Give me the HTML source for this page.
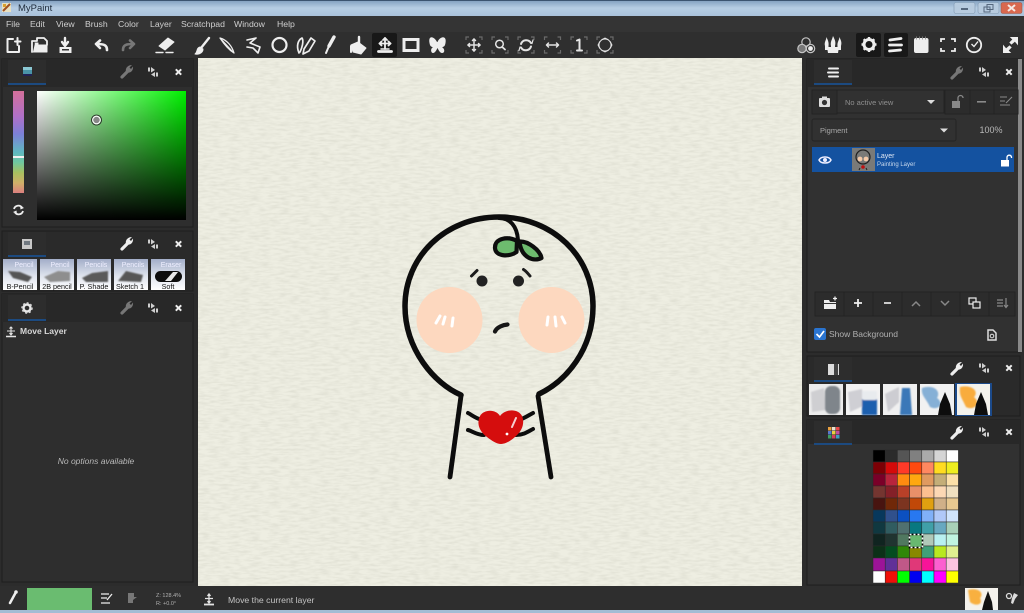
<!DOCTYPE html>
<html><head><meta charset="utf-8"><title>MyPaint</title>
<style>
html,body{margin:0;padding:0;background:#2e2e2e;}
body{width:1024px;height:613px;overflow:hidden;position:relative;}
svg{position:absolute;left:0;top:0;display:block;filter:blur(.3px);}
text{font-family:"Liberation Sans",sans-serif;}
</style></head><body>
<svg width="1024" height="613" viewBox="0 0 1024 613" xmlns="http://www.w3.org/2000/svg">
<defs>
<linearGradient id="tb" x1="0" y1="0" x2="0" y2="1"><stop offset="0" stop-color="#7f9dbd"/><stop offset=".5" stop-color="#b6cde3"/><stop offset="1" stop-color="#a9c1da"/></linearGradient>
<linearGradient id="sv1" x1="0" y1="0" x2="1" y2="0"><stop offset="0" stop-color="#fff"/><stop offset="1" stop-color="#00f000"/></linearGradient>
<linearGradient id="sv2" x1="0" y1="0" x2="0" y2="1"><stop offset="0" stop-color="#000" stop-opacity="0"/><stop offset="1" stop-color="#000"/></linearGradient>
<linearGradient id="hue" x1="0" y1="0" x2="0" y2="1"><stop offset="0" stop-color="#d4709a"/><stop offset=".25" stop-color="#b070c8"/><stop offset=".42" stop-color="#7c80d8"/><stop offset=".6" stop-color="#60b8c0"/><stop offset=".7" stop-color="#70c8a0"/><stop offset=".8" stop-color="#a8c060"/><stop offset=".9" stop-color="#d0b068"/><stop offset="1" stop-color="#dc8080"/></linearGradient>
<linearGradient id="th" x1="0" y1="0" x2="0" y2="1"><stop offset="0" stop-color="#a2adc8"/><stop offset=".55" stop-color="#dfe4ee"/><stop offset="1" stop-color="#fff"/></linearGradient>
<filter id="paper" x="0" y="0" width="100%" height="100%"><feTurbulence type="fractalNoise" baseFrequency=".1 .45" numOctaves="2" seed="4"/><feColorMatrix values="0 0 0 0 .5  0 0 0 0 .5  0 0 0 0 .42  .55 0 0 0 -.2"/></filter>
<filter id="soft"><feGaussianBlur stdDeviation=".3"/></filter>
<filter id="softi"><feGaussianBlur stdDeviation=".9"/></filter>
<path id="corners" d="M-8 -5 V-8 H-5 M5 -8 H8 V-5 M8 5 V8 H5 M-5 8 H-8 V5" fill="none" stroke="#6a6a6a" stroke-width="1.200"/>
<g id="wrench"><path d="M0 0 L6 -6" fill="none" stroke-width="3.200" stroke-linecap="round" stroke="currentColor"/><path d="M4 -5 C3 -9 6 -12 10 -12 L7.500 -9.500 L9 -8 L11 -10.500 C11.500 -6 8 -3 4 -5 Z" fill="currentColor"/></g>
<g id="detach" fill="#cfcfcf"><rect x="0" y="0.500" width="2" height="4"/><path d="M3 0 L7 3 L3 5.500 Z"/><rect x="8" y="5.500" width="2" height="4"/><path d="M7 5 L3 7.500 L7 10 Z"/></g>
<path id="closex" d="M-2.700 -2.700 L2.700 2.700 M2.700 -2.700 L-2.700 2.700" stroke="#eee" stroke-width="2"/>
</defs>

<!-- title bar -->
<rect width="1024" height="16" fill="url(#tb)"/>
<rect width="1024" height="1" fill="#3c5470"/>
<rect x="2" y="3" width="9" height="9" fill="#e8e0c0"/><path d="M3 11 L10 4" stroke="#a05020" stroke-width="2"/><rect x="3" y="4" width="3" height="3" fill="#d8a030"/>
<text x="18" y="11" font-size="9.500" fill="#1d2a3a">MyPaint</text>
<rect x="954" y="2.500" width="21" height="11" rx="2" fill="#b7cbdf" stroke="#7f97b0" stroke-width=".6"/><rect x="961" y="8" width="7" height="2" fill="#55677d"/>
<rect x="978" y="2.500" width="21" height="11" rx="2" fill="#b7cbdf" stroke="#7f97b0" stroke-width=".6"/><rect x="984" y="7" width="6" height="5" fill="none" stroke="#55677d"/><rect x="987" y="4.500" width="6" height="5" fill="none" stroke="#55677d"/>
<rect x="1001" y="2.500" width="21" height="11" rx="2" fill="#d9684f" stroke="#9c5a50" stroke-width=".6"/><path d="M1008 5 L1015 11 M1015 5 L1008 11" stroke="#f6e8e4" stroke-width="2"/>

<!-- menu & toolbar -->
<rect y="16" width="1024" height="16" fill="#343434"/>
<rect y="32" width="1024" height="26" fill="#2f2f2f"/>
<g font-size="8.700" fill="#cfcfcf">
<text x="6" y="27">File</text><text x="30" y="27">Edit</text><text x="56" y="27">View</text><text x="85" y="27">Brush</text><text x="118" y="27">Color</text><text x="150" y="27">Layer</text><text x="181" y="27">Scratchpad</text><text x="234" y="27">Window</text><text x="277" y="27">Help</text>
</g>

<!-- toolbar icons -->
<g fill="none" stroke="#eee" stroke-width="2" stroke-linecap="round" stroke-linejoin="round">
<path d="M13 39 H7.500 V52 H19 V46" stroke-width="2"/><path d="M15 41.500 H20.500 M17.500 38 V45" stroke-width="2"/>
<path d="M32 52 V41 H37 V38 H44 L47 41 V45" stroke-width="1.800"/><path d="M33 52 H47 V45 H38 V43 H35" fill="#eee" stroke-width="1"/>
<path d="M65 38 V45 M62 42 L65 46 L68 42" stroke-width="2.400"/><rect x="59.500" y="47" width="12" height="6" fill="#eee" stroke="none"/><rect x="62" y="49" width="7" height="1.500" fill="#333" stroke="none"/>
<path d="M107 50 C107 45 104 44 97 44 M100 40.500 L96 44 L100 48" stroke-width="2.600"/>
<path d="M123 50 C123 45 126 44 133 44 M130 40.500 L134 44 L130 48" stroke="#777" stroke-width="2.600"/>
<path d="M159 46 L168 38 L174 42 L165 50 Z" fill="#eee" stroke-width="1"/><path d="M156 52.500 H163 M166 52.500 H173" stroke-width="1.400"/>
<path d="M209 38 L201 48" stroke-width="2.400"/><path d="M200 47 C196 48 198 52 195 54 C200 55 203 52 203 49 Z" fill="#eee" stroke-width="1"/>
<path d="M220 38 C227 40 232 46 234 53 C229 50 224 44 220 38 Z" stroke-width="1.300"/><path d="M221 39 L233 52" stroke-width="1"/>
<path d="M247 40 L256 38 L250 43 L260 47 L258 53 L253 48 L247 47" stroke-width="1.600"/>
<circle cx="279.500" cy="45" r="7" stroke-width="2.200"/>
<path d="M299 53 C296 46 298 40 302 38 C304 41 302 48 300 52" stroke-width="1.700"/><path d="M304 49 L311 38 L315 41 L309 51 L303 54 Z" stroke-width="1.700"/>
<path d="M334 37 L329 46" stroke-width="3.400"/><path d="M329 46 L326 53" stroke-width="2"/>
<path d="M351 45 L358 42 L366 48 L361 54 L353 52 Z" fill="#eee" stroke-width="1"/><path d="M359 37 V46" stroke-width="2.400"/><path d="M351 46 V52" stroke-width="2"/>
</g>
<rect x="372" y="33" width="25" height="24" rx="2" fill="#181818"/>
<rect x="856" y="33" width="25" height="24" rx="2" fill="#181818"/>
<rect x="884" y="33" width="24" height="24" rx="2" fill="#181818"/>
<g fill="none" stroke="#eee" stroke-width="1.800" stroke-linecap="round" stroke-linejoin="round">
<path d="M385 38 V49 M379.500 43.500 H390.500"/><path d="M383 40 L385 38 L387 40 M381.500 41.500 L379.500 43.500 L381.500 45.500 M388.500 41.500 L390.500 43.500 L388.500 45.500"/><path d="M378.500 51.500 H391.500" stroke-width="2.800"/><path d="M381 49 H389" stroke-width="1.500"/>
<rect x="404" y="39.500" width="14" height="11" stroke-width="3" stroke-linecap="butt" stroke-linejoin="miter"/>
<path d="M437 42 C434 36 428 35 429.500 43 C430 46 431 47 433 47 C430 49 431 53 433 53 C435 53 436.500 50 437.500 48 C438.500 50 440 53 442 53 C445 53 445 49 442 47 C444 47 445 46 445.500 43 C447 35 440 36 437.500 42 Z" fill="#eee" stroke="none"/>
</g>
<!-- view icons -->
<use href="#corners" x="474" y="45"/><use href="#corners" x="500" y="45"/><use href="#corners" x="526" y="45"/><use href="#corners" x="552.500" y="45"/><use href="#corners" x="579" y="45"/><use href="#corners" x="605" y="45"/>
<g fill="none" stroke="#e4e4e4" stroke-width="1.500" stroke-linecap="round" stroke-linejoin="round">
<path d="M474 39 V51 M468 45 H480"/><path d="M472.500 40.500 L474 39 L475.500 40.500 M472.500 49.500 L474 51 L475.500 49.500 M469.500 43.500 L468 45 L469.500 46.500 M478.500 43.500 L480 45 L478.500 46.500"/>
<circle cx="499.500" cy="44" r="3.800"/><path d="M502.200 47 L505 49.500" stroke-width="1.800"/>
<path d="M521 44 A5.500 5.500 0 0 1 531 43 M531 46.500 A5.500 5.500 0 0 1 521 47.500" stroke-width="2"/><path d="M529 41 L532 43.500 L533 40 M523 49.500 L520 47 L519 50.500" stroke-width="1.200"/>
<path d="M546.500 45 H558.500 M548.500 43 L546.500 45 L548.500 47 M556.500 43 L558.500 45 L556.500 47"/>
<path d="M577 40.500 L579.500 39.500 V50 M577 50.500 H582" stroke-width="2"/>
</g>
<g fill="#e4e4e4"><path d="M601 39.500 H609 L605 37.500 Z M601 50.500 H609 L605 52.500 Z"/><path d="M599.500 41 V49 L597.500 45 Z M610.500 41 V49 L612.500 45 Z" /></g>
<circle cx="605" cy="45" r="6" fill="none" stroke="#e4e4e4" stroke-width="1"/>
<!-- right toolbar -->
<g fill="none" stroke="#c6c6c6" stroke-width="1.200"><circle cx="806" cy="42" r="4.200"/><circle cx="802" cy="48.500" r="4.200" fill="#777"/><circle cx="810.500" cy="48.500" r="4.200"/><circle cx="810.500" cy="48.500" r="2.400" fill="#eee" stroke="none"/></g>
<g fill="#eee"><path d="M825 50 V46 C824 42 826 41 826.500 37 C828 41 829 42 828.500 46 V50 Z M831 53 V46 C830 42 832 40 833 36 C835 40 836 42 835 46 V53 Z M837.500 50 V46 C837 42 839 41 839.500 37 C841 41 842 42 841 46 V50 Z"/><path d="M827 47 H839 L838 53 H828 Z"/></g>
<circle cx="869" cy="44.500" r="5" fill="none" stroke="#eee" stroke-width="3"/>
<g stroke="#eee" stroke-width="2.400" stroke-linecap="butt"><path d="M869 37 V39.500 M869 49.500 V52 M861.500 44.500 H864 M874 44.500 H876.500 M863.700 39.200 L865.500 41 M872.500 48 L874.300 49.800 M874.300 39.200 L872.500 41 M865.500 48 L863.700 49.800"/></g>
<g fill="none" stroke="#eee" stroke-width="2.800" stroke-linecap="round"><path d="M890 40 L901 38.500 M889.500 45 H901.500 M889.500 51 L900.500 50"/></g>
<rect x="914" y="38" width="14.500" height="15" rx="2" fill="#eee"/><path d="M916.500 36.500 V39.500 M919.500 36.500 V39.500 M922.500 36.500 V39.500 M925.500 36.500 V39.500" stroke="#888" stroke-width=".8"/>
<path d="M941 42 V39 H945 M951 39 H955 V42 M955 48 V51 H951 M945 51 H941 V48" fill="none" stroke="#eee" stroke-width="1.800"/>
<circle cx="974" cy="45" r="7.200" fill="none" stroke="#eee" stroke-width="1.800"/><path d="M972 40.500 V0" stroke="none"/><path d="M971.500 44 L974 46.500 L978 41.500" fill="none" stroke="#eee" stroke-width="1.400"/>
<path d="M1003.500 46 V52.500 H1010 L1008 50.500 L1011 47.500 L1009.500 46 L1006 49 Z M1017.500 44 V37.500 H1011 L1013 39.500 L1010 42.500 L1011.500 44 L1015 41 Z" fill="#eee" stroke="#eee"/>

<!-- left panels -->
<rect x="0" y="58" width="198" height="528" fill="#2c2c2c"/>
<rect x="2" y="59" width="191" height="168" fill="#2e2e2e" stroke="#1e1e1e"/>
<rect x="2" y="59" width="191" height="28" fill="#282828"/>
<rect x="8" y="60" width="38" height="25" fill="#2d2d2d"/>
<rect x="8" y="83" width="38" height="2" fill="#1c4a80"/>
<rect x="23" y="67" width="9" height="9" fill="#4a94a8"/><rect x="23" y="67" width="9" height="3" fill="#8bc8d4"/><rect x="23" y="74" width="9" height="2" fill="#225"/>
<rect x="13" y="91" width="11" height="102" fill="url(#hue)"/><rect x="13" y="156" width="11" height="2" fill="#f2f2f2"/>
<rect x="37" y="91" width="149" height="129" fill="url(#sv1)"/><rect x="37" y="91" width="149" height="129" fill="url(#sv2)"/>
<circle cx="96.500" cy="120" r="3.800" fill="#888" stroke="#fff" stroke-width="1.100"/><circle cx="96.500" cy="120" r="5" fill="none" stroke="#222" stroke-width=".8"/>
<g fill="none" stroke="#eee" stroke-width="1.800"><path d="M14 209 A4.500 4.500 0 0 1 22 207.500 M23 211 A4.500 4.500 0 0 1 15 212.500"/></g><path d="M20 205 L24 208 L20.500 209.500 Z M17 214.500 L13 212 L16.500 210.500 Z" fill="#eee"/>

<rect x="2" y="231" width="191" height="60" fill="#2a2a2a" stroke="#1e1e1e"/>
<rect x="8" y="232" width="38" height="24" fill="#2d2d2d"/>
<rect x="8" y="255" width="38" height="2" fill="#1c4a80"/>
<rect x="22" y="239" width="10" height="10" fill="#c8c8c8"/><rect x="24" y="241" width="6" height="4" fill="#707880"/>
<g>
<rect x="3" y="259" width="34" height="31" fill="url(#th)"/><rect x="40" y="259" width="34" height="31" fill="url(#th)"/><rect x="77" y="259" width="34" height="31" fill="url(#th)"/><rect x="114" y="259" width="34" height="31" fill="url(#th)"/><rect x="151" y="259" width="34" height="31" fill="url(#th)"/>
<g filter="url(#softi)"><path d="M8 271 L20 272 L32 277 L28 282 L13 278 Z" fill="#555"/><path d="M44 277 L58 271 L70 272 L70 281 L50 282 Z" fill="#8e8e8e"/><path d="M82 278 L92 273 L108 271 L108 282 L86 282 Z" fill="#5a5a5a"/><path d="M118 281 L126 271 L143 275 L141 282 Z" fill="#565656"/></g>
<rect x="155" y="271" width="27" height="11" rx="5.500" fill="#0c0c0c" filter="url(#soft)"/><path d="M165 281 L173 272 L178 272 L171 281 Z" fill="#e8e8e8" filter="url(#soft)"/>
<g font-size="7" fill="#eef" text-anchor="middle"><text x="24" y="267">Pencil</text><text x="60" y="267">Pencil</text><text x="96" y="267">Pencils</text><text x="133" y="267">Pencils</text><text x="171" y="267">Eraser</text></g>
<g font-size="7.200" fill="#111" text-anchor="middle"><text x="20" y="289">B-Pencil</text><text x="57" y="289">2B pencil</text><text x="94" y="289">P. Shade</text><text x="130" y="289">Sketch 1</text><text x="168" y="289">Soft</text></g>
</g>

<rect x="2" y="294" width="191" height="288" fill="#2e2e2e" stroke="#1e1e1e"/>
<rect x="2" y="294" width="191" height="28" fill="#282828"/>
<rect x="8" y="295" width="38" height="25" fill="#2d2d2d"/>
<rect x="8" y="319" width="38" height="2" fill="#1c4a80"/>
<circle cx="27" cy="308" r="3.500" fill="none" stroke="#e8e8e8" stroke-width="2.400"/><circle cx="27" cy="308" r="5.200" fill="none" stroke="#e8e8e8" stroke-width="1" stroke-dasharray="2 2"/>
<g fill="none" stroke="#e4e4e4" stroke-width="1.100"><path d="M11 327 V335 M7 331 H15 M9.500 328.500 L11 327 L12.500 328.500 M9.500 333 L11 335 L12.500 333"/><path d="M6 336.500 H16" stroke-width="1.500"/></g>
<text x="20" y="334" font-size="8.500" font-weight="bold" fill="#d8d8d8">Move Layer</text>
<text x="96" y="464" font-size="8.500" font-style="italic" fill="#b8b8b8" text-anchor="middle">No options available</text>

<!-- canvas -->
<rect x="198" y="58" width="604" height="528" fill="#eeeee2"/>
<rect x="198" y="58" width="604" height="528" filter="url(#paper)"/>
<g filter="url(#soft)">
<g fill="#fdd8bf"><circle cx="449.500" cy="320" r="33"/><circle cx="551.500" cy="320" r="33"/></g>
<g stroke="#fff" stroke-width="3" stroke-linecap="round" fill="none"><path d="M440 316 L436 323"/><path d="M445 317 L443 324"/><path d="M453 318 L452 326"/><path d="M548 317 L547 325"/><path d="M555 317 L556 326"/><path d="M562 317 L565 323"/></g>
<path d="M461 395 C435 384 405 350 405 306 C405 257 445 217 499 217 C553 217 593 257 593 306 C593 350 566 381 539 394" fill="none" stroke="#0c0c0c" stroke-width="5.500" stroke-linecap="round"/>
<path d="M461 396 L450 477 M538 396 L551 477" fill="none" stroke="#111" stroke-width="4.800" stroke-linecap="round"/>
<path d="M499 218 C510 218 517 226 518 240" fill="none" stroke="#0c0c0c" stroke-width="4" stroke-linecap="round"/>
<path d="M517 241 C508 236 494.500 238 495 248 C495.500 257 510 257 516.500 252 Z" fill="#6dbb6e" stroke="#0c0c0c" stroke-width="4.200" stroke-linejoin="round"/>
<path d="M519.500 241.500 C528 241 540 250 541.500 258 C534 262 521 258 519.500 241.500 Z" fill="#6dbb6e" stroke="#0c0c0c" stroke-width="4.200" stroke-linejoin="round"/>
<g fill="#222"><circle cx="482" cy="281" r="5.500"/><circle cx="518.500" cy="281" r="5.500"/></g>
<path d="M471.500 276 L477 270.500 M523.500 269.500 C526 271 528 273.500 530 276" stroke="#1a1a1a" stroke-width="3" fill="none" stroke-linecap="round"/>
<path d="M495 331.500 C497 327 503 325 507.500 324.500" stroke="#151515" stroke-width="4.200" fill="none" stroke-linecap="round"/>
<path d="M468 413 C472 415 475 418 482 420 M468 430 C472 431 477 435 484 435 M533 413 C529 415 525 418 519 420 M533 429 C529 431 524 435 516 435" stroke="#111" stroke-width="4" fill="none" stroke-linecap="round"/>
<path d="M500 416 C496 409 484 409 480 416 C476 424 480 432 487 437 C492 441 497 444 501 444 C506 444 512 440 516 436 C522 431 525 423 522 416 C518 408 505 409 500 416 Z" fill="#d50a10"/>
<path d="M516 418 L512 427" stroke="#fff" stroke-width="2" stroke-linecap="round" opacity=".8"/><circle cx="507" cy="434" r="1.400" fill="#fff"/>
</g>

<!-- right panels -->
<rect x="802" y="58" width="222" height="528" fill="#2c2c2c"/>
<rect x="807" y="59" width="213" height="293" fill="#313131" stroke="#1e1e1e"/>
<rect x="807" y="59" width="213" height="28" fill="#282828"/>
<rect x="814" y="60" width="38" height="25" fill="#2d2d2d"/>
<rect x="814" y="83" width="38" height="2" fill="#1c4a80"/>
<rect x="1018" y="59" width="4" height="293" fill="#8a8a8a"/>
<path d="M829 68.500 H838 M828 72.500 H838 M829 76.500 H838" stroke="#eee" stroke-width="2" fill="none" stroke-linecap="round"/>
<g fill="#2c2c2c" stroke="#232323"><rect x="812" y="90" width="25" height="24"/><rect x="837" y="90" width="107" height="23" fill="#313131"/><rect x="945" y="90" width="25" height="24"/><rect x="970" y="90" width="24" height="24"/><rect x="994" y="90" width="24" height="24"/></g>
<rect x="819" y="98" width="11" height="9" rx="1" fill="#ddd"/><circle cx="824.500" cy="102.500" r="2.600" fill="#333"/><rect x="822" y="96.500" width="5" height="2" fill="#ddd"/>
<text x="845" y="105" font-size="7.500" fill="#8e8e8e">No active view</text>
<path d="M927 100 H935 L931 104 Z" fill="#ddd"/>
<rect x="952" y="101" width="8" height="7" fill="#888"/><path d="M958 101 V98 A2.500 2.500 0 0 1 963 98" fill="none" stroke="#888" stroke-width="1.300"/>
<rect x="977" y="101" width="9" height="1.600" fill="#8a8a8a"/>
<path d="M1000 97 H1007 M1000 101 H1005 M1000 105 H1010 M1006 103 L1012 97" stroke="#8a8a8a" stroke-width="1.100" fill="none"/>
<rect x="812" y="119" width="144" height="22" rx="2" fill="#313131" stroke="#242424"/>
<text x="820" y="133" font-size="7.500" fill="#a8a8a8">Pigment</text>
<path d="M940 128.500 H948 L944 132.500 Z" fill="#ddd"/>
<text x="991" y="133" font-size="9" fill="#b8b8b8" text-anchor="middle">100%</text>
<rect x="812" y="147" width="202" height="25" fill="#1452a0"/>
<path d="M819 160 C821 156 829 156 831 160 C829 164 821 164 819 160 Z" fill="none" stroke="#eef" stroke-width="1.500"/><circle cx="825" cy="160" r="2" fill="#eef"/>
<rect x="852" y="148" width="23" height="23" fill="#7a7a78"/><circle cx="863" cy="157" r="7" fill="none" stroke="#222" stroke-width="1.200"/><circle cx="860" cy="159" r="2.400" fill="#f4c9a8"/><circle cx="866" cy="159" r="2.400" fill="#f4c9a8"/><path d="M860 168 L859 170 M866 168 L867 170" stroke="#222"/><circle cx="863" cy="167" r="1.800" fill="#c01010"/>
<text x="877" y="158" font-size="7" fill="#e0e8f4">Layer</text>
<text x="877" y="166" font-size="6" fill="#c8d8ec">Painting Layer</text>
<rect x="1001" y="160" width="8" height="6.500" fill="#fff"/><path d="M1007 160 V157 A2.300 2.300 0 0 1 1011.500 157 V158" fill="none" stroke="#fff" stroke-width="1.300"/>
<g fill="#2c2c2c" stroke="#232323"><rect x="815" y="292" width="29" height="24"/><rect x="844" y="292" width="29" height="24"/><rect x="873" y="292" width="29" height="24"/><rect x="902" y="292" width="29" height="24"/><rect x="931" y="292" width="29" height="24"/><rect x="960" y="292" width="29" height="24"/><rect x="989" y="292" width="26" height="24"/></g>
<path d="M824 300 H829 L830 302 H836 V309 H824 Z" fill="#eee"/><path d="M833 298.500 H837 M835 296.500 V300.500" stroke="#eee" stroke-width="1.300"/><rect x="824" y="303" width="12" height="1" fill="#333"/>
<path d="M854 303 H862 M858 299 V307" stroke="#eee" stroke-width="1.800"/>
<path d="M884 303 H891" stroke="#ddd" stroke-width="1.800"/>
<path d="M912 306 L916 302 L920 306 M941 301 L945 305 L949 301" stroke="#888" stroke-width="1.500" fill="none"/>
<rect x="969" y="298" width="7" height="6" fill="none" stroke="#eee" stroke-width="1.200"/><rect x="973" y="302" width="7" height="6" fill="#2c2c2c" stroke="#eee" stroke-width="1.200"/>
<path d="M997 300 H1003 M997 303 H1003 M997 306 H1003 M1006 298 V307 M1004 305 L1006 307.500 L1008 305" stroke="#888" stroke-width="1.200" fill="none"/>
<rect x="814" y="328" width="12" height="12" rx="2" fill="#2a74d0"/><path d="M816.500 334 L819.500 337 L824 331" stroke="#fff" stroke-width="1.700" fill="none"/>
<text x="829" y="337" font-size="8.500" fill="#b0b0b0">Show Background</text>
<path d="M988 330 H993 L996 333 V340 H988 Z" fill="none" stroke="#ddd" stroke-width="1.500"/><circle cx="992" cy="336" r="1.800" fill="none" stroke="#ddd"/>

<rect x="807" y="356" width="213" height="60" fill="#2a2a2a" stroke="#1e1e1e"/>
<rect x="814" y="357" width="38" height="24" fill="#2d2d2d"/>
<rect x="814" y="380" width="38" height="2" fill="#1c4a80"/>
<rect x="828" y="364" width="11" height="11" fill="#ddd"/><rect x="834" y="364" width="4" height="11" fill="#444"/>
<g>
<rect x="809" y="384" width="34" height="31" fill="#ececec"/><rect x="846" y="384" width="34" height="31" fill="#f2f2f2"/><rect x="883" y="384" width="34" height="31" fill="#f0f0f0"/><rect x="920" y="384" width="34" height="31" fill="#f2f2f2"/><rect x="955" y="383" width="37" height="33" fill="#1c4a8a"/><rect x="957" y="384" width="33" height="31" fill="#f4f2ec"/>
<g filter="url(#softi)">
<path d="M811 392 L824 388 L826 410 L812 412 Z" fill="#cfcfd2"/><rect x="825" y="386" width="15" height="28" rx="6" fill="#7f858b"/>
<path d="M848 392 L862 389 L863 406 L850 412 Z" fill="#cfcfd4"/><rect x="862" y="399" width="15" height="16" fill="#1c5fae"/><rect x="862" y="391" width="15" height="9" rx="2" fill="#e8ebee"/>
<path d="M885 394 L899 387 L899 402 L888 412 Z" fill="#cdcdd2"/><path d="M902 388 H910 L912 415 H900 Z" fill="#3a78b8"/>
<path d="M922 388 C935 384 941 392 937 398 C945 404 938 411 930 407 C926 398 921 396 922 388 Z" fill="#86b0d6"/>
<path d="M960 387 C973 384 979 392 974 397 C982 404 973 411 966 407 C962 398 959 396 960 387 Z" fill="#f8ac3c"/>
</g>
<g filter="url(#soft)"><path d="M945 392 L950 404 L952 415 H938 L940 404 Z" fill="#111"/><path d="M981 392 L986 404 L988 415 H974 L976 404 Z" fill="#111"/></g>
</g>

<rect x="807" y="420" width="213" height="165" fill="#313131" stroke="#1e1e1e"/>
<rect x="807" y="420" width="213" height="24" fill="#282828"/>
<rect x="814" y="421" width="38" height="23" fill="#2d2d2d"/>
<rect x="814" y="443" width="38" height="2" fill="#1c4a80"/>
<g><rect x="828" y="427" width="3.500" height="3.500" fill="#e8a040"/><rect x="832" y="427" width="3.500" height="3.500" fill="#e8e0d0"/><rect x="836" y="427" width="3.500" height="3.500" fill="#e84848"/><rect x="828" y="431" width="3.500" height="3.500" fill="#5878d0"/><rect x="832" y="431" width="3.500" height="3.500" fill="#e8d040"/><rect x="836" y="431" width="3.500" height="3.500" fill="#c050a0"/><rect x="828" y="435" width="3.500" height="3.500" fill="#40a060"/><rect x="832" y="435" width="3.500" height="3.500" fill="#d04060"/><rect x="836" y="435" width="3.500" height="3.500" fill="#40a0c0"/></g>

<!-- panel header tools -->
<use href="#wrench" x="122" y="77" color="#777"/>
<use href="#wrench" x="122" y="249" color="#eee"/>
<use href="#wrench" x="122" y="313" color="#777"/>
<use href="#wrench" x="952" y="78" color="#777"/>
<use href="#wrench" x="952" y="374" color="#eee"/>
<use href="#wrench" x="952" y="438" color="#eee"/>
<use href="#detach" x="148" y="67"/><use href="#detach" x="148" y="239"/><use href="#detach" x="148" y="303"/>
<use href="#detach" x="979" y="67"/><use href="#detach" x="979" y="363"/><use href="#detach" x="979" y="427"/>
<use href="#closex" x="178.500" y="72"/><use href="#closex" x="178.500" y="244"/><use href="#closex" x="178.500" y="308"/>
<use href="#closex" x="1009" y="72"/><use href="#closex" x="1009" y="368"/><use href="#closex" x="1009" y="432"/>

<!-- palette -->
<g stroke="#2a2a2a" stroke-width=".5">
<g transform="translate(873,450)"><rect x="0" width="12.200" height="12" fill="#000"/><rect x="12.200" width="12.200" height="12" fill="#2b2b2b"/><rect x="24.400" width="12.200" height="12" fill="#555"/><rect x="36.600" width="12.200" height="12" fill="#808080"/><rect x="48.800" width="12.200" height="12" fill="#aaa"/><rect x="61" width="12.200" height="12" fill="#d5d5d5"/><rect x="73.200" width="12.200" height="12" fill="#fff"/></g>
<g transform="translate(873,462)"><rect x="0" width="12.200" height="12" fill="#7c0005"/><rect x="12.200" width="12.200" height="12" fill="#d50a0a"/><rect x="24.400" width="12.200" height="12" fill="#ff3a28"/><rect x="36.600" width="12.200" height="12" fill="#ff4a10"/><rect x="48.800" width="12.200" height="12" fill="#ff8860"/><rect x="61" width="12.200" height="12" fill="#ffdc20"/><rect x="73.200" width="12.200" height="12" fill="#eeee20"/></g>
<g transform="translate(873,474)"><rect x="0" width="12.200" height="12" fill="#7a0028"/><rect x="12.200" width="12.200" height="12" fill="#b8243c"/><rect x="24.400" width="12.200" height="12" fill="#ff8c10"/><rect x="36.600" width="12.200" height="12" fill="#ffa810"/><rect x="48.800" width="12.200" height="12" fill="#e09a60"/><rect x="61" width="12.200" height="12" fill="#c4ae78"/><rect x="73.200" width="12.200" height="12" fill="#fce0a8"/></g>
<g transform="translate(873,486)"><rect x="0" width="12.200" height="12" fill="#743530"/><rect x="12.200" width="12.200" height="12" fill="#842028"/><rect x="24.400" width="12.200" height="12" fill="#b84028"/><rect x="36.600" width="12.200" height="12" fill="#e89068"/><rect x="48.800" width="12.200" height="12" fill="#fcc090"/><rect x="61" width="12.200" height="12" fill="#fcd8b4"/><rect x="73.200" width="12.200" height="12" fill="#f0e0c0"/></g>
<g transform="translate(873,498)"><rect x="0" width="12.200" height="12" fill="#481410"/><rect x="12.200" width="12.200" height="12" fill="#702808"/><rect x="24.400" width="12.200" height="12" fill="#7c3420"/><rect x="36.600" width="12.200" height="12" fill="#c04808"/><rect x="48.800" width="12.200" height="12" fill="#e0a010"/><rect x="61" width="12.200" height="12" fill="#d0b088"/><rect x="73.200" width="12.200" height="12" fill="#e8c890"/></g>
<g transform="translate(873,510)"><rect x="0" width="12.200" height="12" fill="#08385c"/><rect x="12.200" width="12.200" height="12" fill="#30508c"/><rect x="24.400" width="12.200" height="12" fill="#0c50c0"/><rect x="36.600" width="12.200" height="12" fill="#2878f0"/><rect x="48.800" width="12.200" height="12" fill="#80b0f8"/><rect x="61" width="12.200" height="12" fill="#b0c8f8"/><rect x="73.200" width="12.200" height="12" fill="#d0e4fc"/></g>
<g transform="translate(873,522)"><rect x="0" width="12.200" height="12" fill="#103840"/><rect x="12.200" width="12.200" height="12" fill="#305c60"/><rect x="24.400" width="12.200" height="12" fill="#507070"/><rect x="36.600" width="12.200" height="12" fill="#087880"/><rect x="48.800" width="12.200" height="12" fill="#40a0a8"/><rect x="61" width="12.200" height="12" fill="#68a8c0"/><rect x="73.200" width="12.200" height="12" fill="#a8d0b8"/></g>
<g transform="translate(873,534)"><rect x="0" width="12.200" height="12" fill="#102420"/><rect x="12.200" width="12.200" height="12" fill="#203430"/><rect x="24.400" width="12.200" height="12" fill="#507860"/><rect x="36.600" width="12.200" height="12" fill="#68b870"/><rect x="48.800" width="12.200" height="12" fill="#b0c8b8"/><rect x="61" width="12.200" height="12" fill="#b8f0f0"/><rect x="73.200" width="12.200" height="12" fill="#c0f4e0"/></g>
<g transform="translate(873,546)"><rect x="0" width="12.200" height="12" fill="#0c3018"/><rect x="12.200" width="12.200" height="12" fill="#044c20"/><rect x="24.400" width="12.200" height="12" fill="#308808"/><rect x="36.600" width="12.200" height="12" fill="#888800"/><rect x="48.800" width="12.200" height="12" fill="#40a078"/><rect x="61" width="12.200" height="12" fill="#b8e820"/><rect x="73.200" width="12.200" height="12" fill="#e0f090"/></g>
<g transform="translate(873,558)"><rect x="0" width="12.200" height="13" fill="#9c1498"/><rect x="12.200" width="12.200" height="13" fill="#603098"/><rect x="24.400" width="12.200" height="13" fill="#c05888"/><rect x="36.600" width="12.200" height="13" fill="#e03878"/><rect x="48.800" width="12.200" height="13" fill="#f81498"/><rect x="61" width="12.200" height="13" fill="#fc60d0"/><rect x="73.200" width="12.200" height="13" fill="#fcc4e0"/></g>
<g transform="translate(873,571)"><rect x="0" width="12.200" height="12" fill="#fff"/><rect x="12.200" width="12.200" height="12" fill="#f01008"/><rect x="24.400" width="12.200" height="12" fill="#00ff00"/><rect x="36.600" width="12.200" height="12" fill="#0000f0"/><rect x="48.800" width="12.200" height="12" fill="#00ffff"/><rect x="61" width="12.200" height="12" fill="#ff00ff"/><rect x="73.200" width="12.200" height="12" fill="#ffff00"/></g>
</g>
<rect x="909.500" y="534.500" width="13" height="13" fill="#68b870" stroke="#000" stroke-width="1.600"/>
<rect x="909.500" y="534.500" width="13" height="13" fill="none" stroke="#fff" stroke-width="1.600" stroke-dasharray="2 2"/>

<!-- status bar -->
<rect y="586" width="1024" height="24" fill="#2e2e2e"/>
<rect y="610" width="1024" height="3" fill="#a4bcd4"/>
<path d="M16 592 L10 603" stroke="#eee" stroke-width="2.500" stroke-linecap="round"/><circle cx="16" cy="592" r="1.800" fill="#eee"/>
<rect x="27" y="588" width="65" height="22" fill="#6abc70"/>
<path d="M101 594 H109 M101 598 H107 M101 603 H110 M107 600 L112 594" stroke="#eee" stroke-width="1.300" fill="none"/>
<path d="M128 593 H134 V597 H137 L133 600 V603 H128 Z" fill="#777"/>
<text x="156" y="597" font-size="5.500" fill="#b0b0b0">Z: 128.4%</text>
<text x="156" y="605" font-size="5.500" fill="#b0b0b0">R: +0.0°</text>
<g fill="none" stroke="#e4e4e4" stroke-width="1.300"><path d="M209 594 V603 M205 598.500 H213 M207.500 596 L209 594 L210.500 596 M207.500 601 L209 603 L210.500 601"/><path d="M204 604.500 H214" stroke-width="1.800"/></g>
<text x="228" y="603" font-size="8.700" fill="#c4c4c4">Move the current layer</text>
<rect x="965" y="588" width="33" height="22" fill="#f4f2ec"/>
<g filter="url(#softi)"><path d="M968 590 C980 587 984 594 980 598 C984 606 974 606 970 602 Z" fill="#f8b040"/></g>
<path d="M988 591 L992 602 L993 610 H982 L984 602 Z" fill="#111"/>
<circle cx="1009" cy="596" r="2.500" fill="none" stroke="#ddd" stroke-width="1.300"/><path d="M1014 593 L1018 595 L1015 599 L1013 604 L1011 603 L1012 598 Z" fill="#ddd"/>
</svg>
</body></html>
